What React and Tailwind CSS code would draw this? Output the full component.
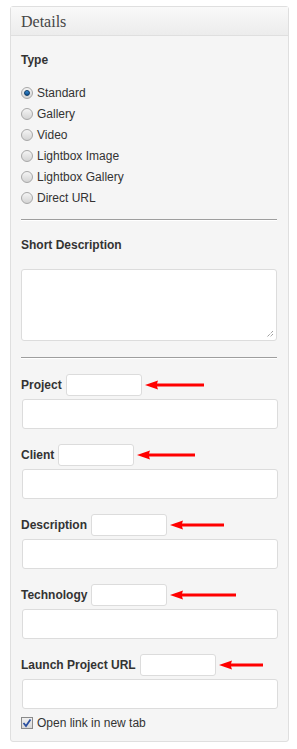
import React from 'react';

const Arrow = ({ w }) => (
    <svg width={w} height="10" viewBox={`0 0 ${w} 10`} className="shrink-0">
        <path d={`M0 5 L13 0.5 L12 3.5 L${w} 3.5 L${w} 6.5 L12 6.5 L13 9.5 Z`} fill="#f00" />
    </svg>
);

const Radio = ({ checked }) => (
    <span className="w-[12px] h-[12px] rounded-full border border-[#a7a7a7] bg-gradient-to-b from-[#f4f4f4] to-[#d4d4d4] flex items-center justify-center shrink-0">
        {checked && <span className="w-[6px] h-[6px] rounded-full bg-gradient-to-b from-[#3a8fd8] to-[#0b4f8f] border border-[#0d3b66]"></span>}
    </span>
);

const Divider = ({ className }) => (
    <div className={`h-[2px] border-t border-[#9e9e9e] border-b border-b-white ${className}`}></div>
);

const types = ['Standard', 'Gallery', 'Video', 'Lightbox Image', 'Lightbox Gallery', 'Direct URL'];

const fields = [
    { label: 'Project', arrow: 59 },
    { label: 'Client', arrow: 58 },
    { label: 'Description', arrow: 54 },
    { label: 'Technology', arrow: 66 },
    { label: 'Launch Project URL', arrow: 44 },
];

export default function App() {
    return (
        <div className="w-[297px] h-[749px] bg-white pt-[6px] pl-[10px]" style={{ fontFamily: '"Liberation Sans", Arial, sans-serif' }}>
            <div className="w-[279px] h-[736px] border border-[#dfdfdf] rounded-[3px] bg-[#f5f5f5] text-[12px] text-[#333]">
                {/* header */}
                <div className="h-[29px] border-b border-[#dfdfdf] bg-gradient-to-b from-[#f9f9f9] to-[#ececec] flex items-center px-[10px] pt-[2px]">
                    <span className="text-[16px] text-[#464646]" style={{ fontFamily: '"Liberation Serif", Georgia, serif' }}>Details</span>
                </div>

                <div className="px-[10px] pt-[17px]">
                    <div className="font-bold leading-[15px]">Type</div>

                    <div className="mt-[14px]">
                        {types.map((t, i) => (
                            <div key={t} className="h-[21px] flex items-center gap-[4px]">
                                <Radio checked={i === 0} />
                                <span>{t}</span>
                            </div>
                        ))}
                    </div>

                    <Divider className="mt-[11px] w-[256px]" />

                    <div className="font-bold leading-[15px] mt-[17px]">Short Description</div>
                    <div className="relative mt-[16px] w-[256px] h-[72px] bg-white border border-[#dcdcdc] rounded-[3px]">
                        <svg width="8" height="8" viewBox="0 0 8 8" className="absolute right-[2px] bottom-[2px]">
                            <path d="M7 1 L1 7 M7 4 L4 7" stroke="#777" strokeWidth="1" strokeDasharray="1 1" />
                        </svg>
                    </div>

                    <Divider className="mt-[16px] w-[256px]" />

                    <div className="mt-[15px] flex flex-col">
                        {fields.map((f, i) => (
                            <div key={f.label} className={i > 0 ? 'mt-[15px]' : ''}>
                                <div className="h-[22px] flex items-center">
                                    <span className="font-bold mr-[4px]">{f.label}</span>
                                    <div className="w-[76px] h-[22px] bg-white border border-[#dcdcdc] rounded-[3px] shrink-0"></div>
                                    <div className="ml-[3px] flex items-center">
                                        <Arrow w={f.arrow} />
                                    </div>
                                </div>
                                <div className="mt-[3px] ml-[1px] w-[256px] h-[30px] bg-white border border-[#dcdcdc] rounded-[3px]"></div>
                            </div>
                        ))}
                    </div>

                    <div className="mt-[6px] h-[15px] flex items-center gap-[4px]">
                        <span className="w-[12px] h-[12px] border border-[#8a8a8a] bg-gradient-to-b from-[#f0f0f0] to-[#d8d8d8] flex items-center justify-center shrink-0">
                            <svg width="10" height="10" viewBox="0 0 10 10">
                                <path d="M1.5 5 L4 8 L8.5 1.5" stroke="#2a4fa0" strokeWidth="1.8" fill="none" />
                            </svg>
                        </span>
                        <span>Open link in new tab</span>
                    </div>
                </div>
            </div>
        </div>
    );
}
